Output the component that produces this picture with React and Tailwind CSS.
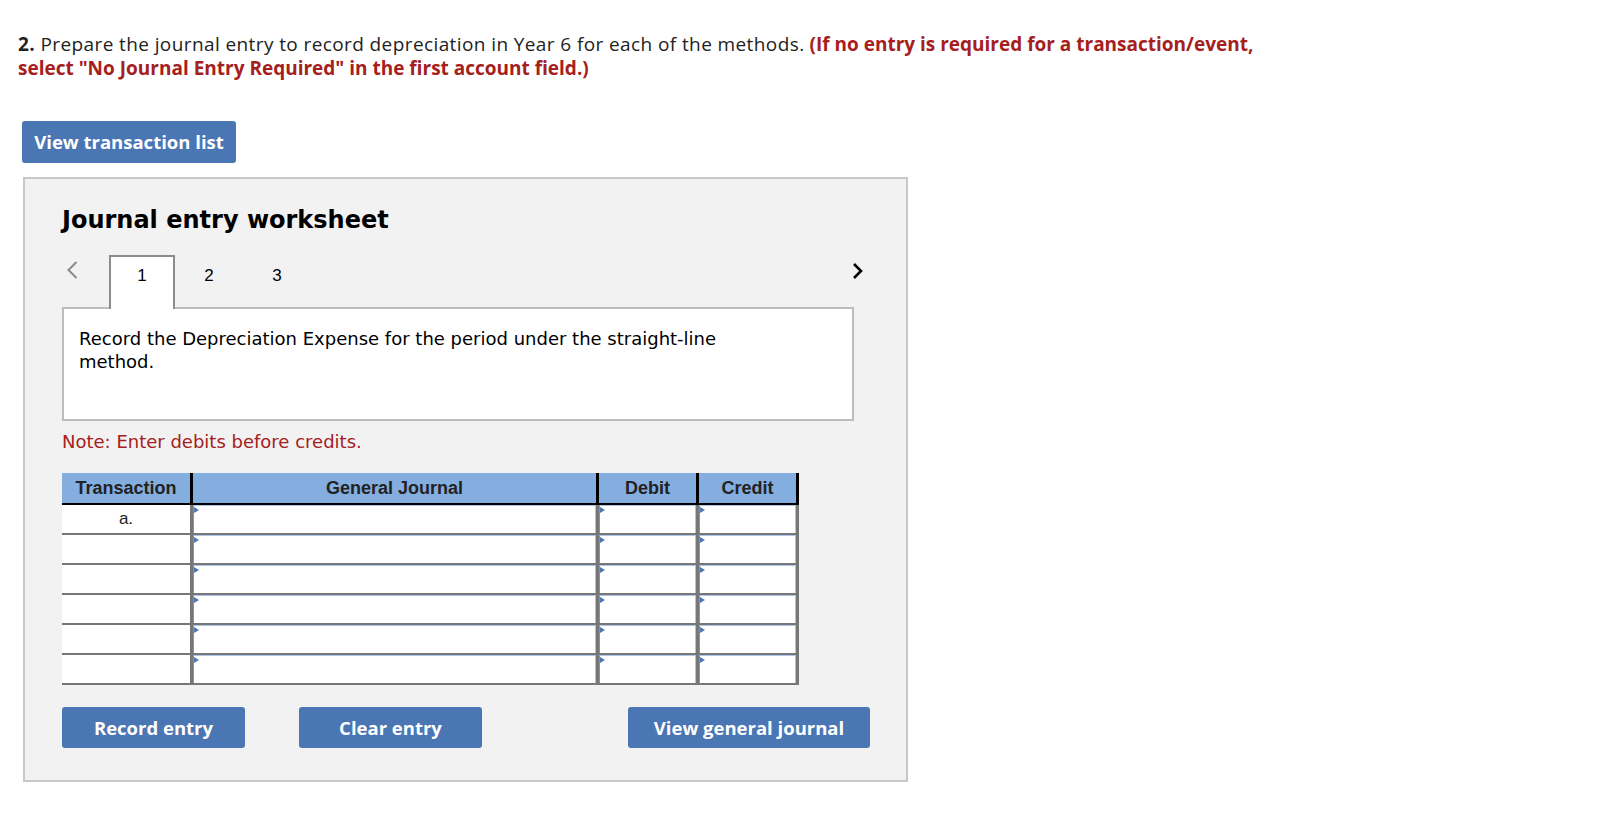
import React from "react";

const rows = ["a.", "", "", "", "", ""];

function Chevron({ dir, className }) {
  return (
    <svg width="14" height="22" viewBox="0 0 14 22" className={className}>
      {dir === "left" ? (
        <path d="M11.5 3 L3.5 11 L11.5 19" fill="none" stroke="currentColor" strokeWidth="2" />
      ) : (
        <path d="M3 4 L10 11 L3 18" fill="none" stroke="currentColor" strokeWidth="2.6" />
      )}
    </svg>
  );
}

function InputCell() {
  return (
    <div className="relative h-full flex-1 border border-b-0 border-[#a9c5ea] border-l-[#6f98d0] bg-white">
      <span className="absolute left-0 top-[1px] h-0 w-0 border-y-[3px] border-l-[5px] border-y-transparent border-l-[#4a78b5]" />
    </div>
  );
}

export default function App() {
  return (
    <div className="min-h-[832px] w-full bg-white pl-[18px] pt-[33px] font-['Open_Sans',Arial,sans-serif]">
      {/* question */}
      <p className="text-[19px] leading-[23.5px] text-[#222]">
        <span className="tracking-[0.4px]">
          <b>2.</b> Prepare the journal entry to record depreciation in Year 6 for each of the methods.
        </span>{" "}
        <b className="text-[#a5201c]">
          (If no entry is required for a transaction/event,
          <br />
          select "No Journal Entry Required" in the first account field.)
        </b>
      </p>

      <button className="ml-[4px] mt-[41px] flex h-[42px] w-[214px] items-center justify-center rounded-[3px] bg-[#4a76b4] text-[18.5px] font-bold text-white">
        View transaction list
      </button>

      {/* worksheet panel */}
      <div className="ml-[5px] mt-[14px] w-[885px] border-2 border-[#c8c8c8] bg-[#f2f2f2] pb-[32px] pl-[37px] pt-[27px]">
        <h2 className="font-['DejaVu_Sans',Verdana,sans-serif] text-[24px] font-bold leading-[28px] text-black">
          Journal entry worksheet
        </h2>

        <div className="mt-[21px] flex h-[52px] w-[803px] items-start font-['Liberation_Sans',Arial,sans-serif]">
          <div className="w-[47px] pl-[3px] pt-[4px] text-[#8a8a8a]">
            <Chevron dir="left" />
          </div>
          <div className="relative z-10 flex h-[54px] w-[66px] justify-center border-2 border-b-0 border-[#8c8c8c] bg-white pt-[6px] text-[17px] text-black">
            1
          </div>
          <div className="flex w-[68px] justify-center pt-[8px] text-[17px] text-black">2</div>
          <div className="flex w-[68px] justify-center pt-[8px] text-[17px] text-black">3</div>
          <div className="ml-auto pt-[5px] text-black">
            <Chevron dir="right" />
          </div>
        </div>

        <div className="h-[114px] w-[792px] border-2 border-[#bdbdbd] bg-white pl-[15px] pt-[18px]">
          <p className="w-[660px] font-['DejaVu_Sans',Verdana,sans-serif] text-[18px] leading-[23px] text-black">
            Record the Depreciation Expense for the period under the straight-line method.
          </p>
        </div>

        <p className="mt-[9px] font-['DejaVu_Sans',Verdana,sans-serif] text-[18px] leading-[23px] text-[#a5201c]">
          Note: Enter debits before credits.
        </p>

        {/* journal table */}
        <div className="mt-[20px] w-[737px] font-['Liberation_Sans',Arial,sans-serif]">
          <div className="flex h-[32px] border-b-2 border-black bg-[#84aee0] text-[18px] font-bold text-[#222]">
            <div className="flex w-[128px] items-center justify-center">Transaction</div>
            <div className="flex w-[406px] items-center justify-center border-l-[3px] border-black">General Journal</div>
            <div className="flex w-[100px] items-center justify-center border-l-[3px] border-black">Debit</div>
            <div className="flex w-[103px] items-center justify-center border-x-[3px] border-black">Credit</div>
          </div>
          {rows.map((t, i) => (
            <div key={i} className="flex h-[30px] border-b-2 border-[#777]">
              <div className="flex w-[128px] items-center justify-center bg-white text-[17px] text-[#222]">{t}</div>
              <div className="flex w-[406px] border-l-[3px] border-[#777]">
                <InputCell />
              </div>
              <div className="flex w-[100px] border-l-[3px] border-[#777]">
                <InputCell />
              </div>
              <div className="flex w-[103px] border-x-[3px] border-[#777]">
                <InputCell />
              </div>
            </div>
          ))}
        </div>

        <div className="mt-[22px] flex">
          <button className="flex h-[41px] w-[183px] items-center justify-center rounded-[3px] bg-[#4a76b4] text-[18.5px] font-bold text-white">
            Record entry
          </button>
          <button className="ml-[54px] flex h-[41px] w-[183px] items-center justify-center rounded-[3px] bg-[#4a76b4] text-[18.5px] font-bold text-white">
            Clear entry
          </button>
          <button className="ml-[146px] flex h-[41px] w-[242px] items-center justify-center rounded-[3px] bg-[#4a76b4] text-[18.5px] font-bold text-white">
            View general journal
          </button>
        </div>
      </div>
    </div>
  );
}
